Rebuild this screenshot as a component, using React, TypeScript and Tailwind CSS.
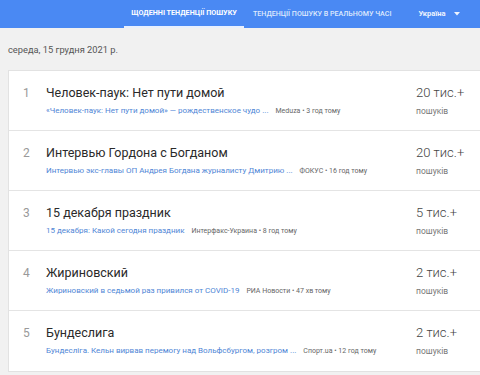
import React from "react";

const rows = [
  {
    n: 1,
    title: "Человек-паук: Нет пути домой",
    link: "«Человек-паук: Нет пути домой» — рождественское чудо ...",
    src: "Meduza • 3 год тому",
    count: "20 тис.+",
  },
  {
    n: 2,
    title: "Интервью Гордона с Богданом",
    link: "Интервью экс-главы ОП Андрея Богдана журналисту Дмитрию ...",
    src: "ФОКУС • 16 год тому",
    count: "20 тис.+",
  },
  {
    n: 3,
    title: "15 декабря праздник",
    link: "15 декабря: Какой сегодня праздник",
    src: "Интерфакс-Украина • 8 год тому",
    count: "5 тис.+",
  },
  {
    n: 4,
    title: "Жириновский",
    link: "Жириновский в седьмой раз привился от COVID-19",
    src: "РИА Новости • 47 хв тому",
    count: "2 тис.+",
  },
  {
    n: 5,
    title: "Бундеслига",
    link: "Бундесліга. Кельн вирвав перемогу над Вольфсбургом, розгром ...",
    src: "Спорт.ua • 12 год тому",
    count: "2 тис.+",
  },
];

export default function App() {
  return (
    <div
      className="w-[480px] h-[375px] overflow-hidden bg-[#f1f1f1]"
      style={{ fontFamily: "Roboto, 'Noto Sans', sans-serif" }}
    >
      <div className="h-[28px] bg-[#4a89f3] flex items-stretch">
        <div className="ml-[124px] w-[120px] flex items-center justify-center border-b-2 border-[#e8f0fe] text-[7.2px] font-bold text-white">
          ЩОДЕННІ ТЕНДЕНЦІЇ ПОШУКУ
        </div>
        <div className="ml-[9px] flex items-center text-[7.1px] text-[#dfe9fd] font-medium">
          ТЕНДЕНЦІЇ ПОШУКУ В РЕАЛЬНОМУ ЧАСІ
        </div>
        <div className="ml-[27px] flex items-center gap-[8px] text-[7.5px] font-bold text-[#eef4fe]">
          <span>Україна</span>
          <svg width="6" height="4" viewBox="0 0 6 4">
            <path d="M0 0 L6 0 L3 3.5 Z" fill="#eef4fe" />
          </svg>
        </div>
      </div>
      <div className="pl-[8px] pt-[15px] text-[9.3px] text-[#555] h-[42px]">
        середа, 15 грудня 2021 р.
      </div>
      <div className="ml-[8px] bg-white border border-[#e2e2e2] border-r-0">
        {rows.map((r, i) => (
          <div
            key={r.n}
            className={`flex h-[60px] ${i < rows.length - 1 ? "border-b border-[#e4e4e4]" : ""}`}
          >
            <div className="w-[37px] pl-[14px] pt-[12px] text-[12px] leading-[20px] text-[#999]">
              {r.n}
            </div>
            <div className="flex-1 min-w-0 pt-[12px]">
              <div className="text-[12.5px] leading-[20px] text-[#2a2a2a]">{r.title}</div>
              <div className="mt-[1px] flex items-baseline gap-[7px] leading-[14px] whitespace-nowrap">
                <span className="text-[8px] text-[#4f86d6]">{r.link}</span>
                <span className="text-[7px] text-[#666]">{r.src}</span>
              </div>
            </div>
            <div className="w-[64px] pt-[12px]">
              <div className="text-[13px] leading-[20px] text-[#444] font-light">{r.count}</div>
              <div className="mt-[1px] text-[8.5px] leading-[14px] text-[#777]">пошуків</div>
            </div>
          </div>
        ))}
      </div>
    </div>
  );
}
